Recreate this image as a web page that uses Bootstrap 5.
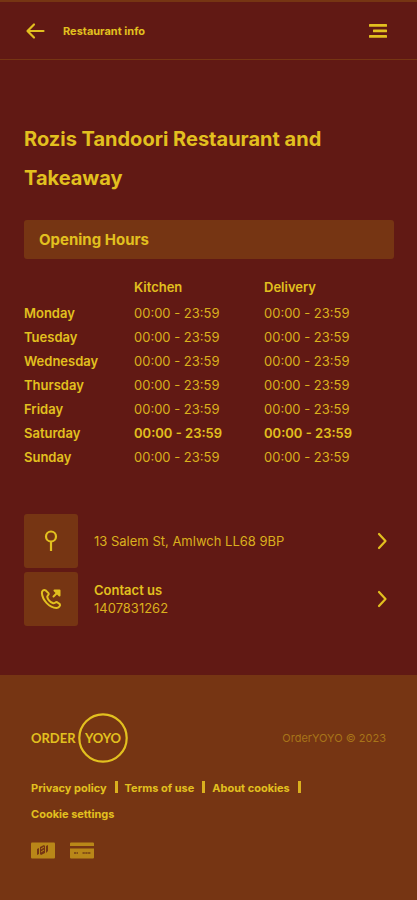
<!DOCTYPE html>
<html lang="en">
<head>
<meta charset="utf-8">
<meta name="viewport" content="width=device-width, initial-scale=1">
<title>Restaurant info</title>
<link href="https://cdn.jsdelivr.net/npm/bootstrap@5.3.0/dist/css/bootstrap.min.css" rel="stylesheet">
<style>
:root { --wine: #611914; --brown: #763513; --gold: #e2c01f; --amber: #dab01e; }
body { background: var(--brown); color: var(--gold); font: 400 13px/18px Inter, "Liberation Sans", sans-serif; }
a, button { color: inherit; text-decoration: none; }
a:hover { color: #fff0a0; }
svg { display: block; flex: none; }
.page-area { background: var(--wine); }
.topbar { height: 60px; border-top: 2px solid var(--brown); border-bottom: 1px solid var(--brown); padding: 0 29px 0 25px; }
.topbar-title { font-size: 11px; font-weight: 700; line-height: 18px; margin: 0 0 0 18px; }
.info { padding: 60px 23px 49px 24px; }
.shop-name { font-size: 20px; font-weight: 700; line-height: 39px; margin: 0 0 22px; }
.section-bar { background: var(--brown); border-radius: 3px; font-size: 15px; font-weight: 700; line-height: 39px; padding: 0 15px; margin: 0 0 16px; }
.hours { width: 100%; table-layout: fixed; margin-bottom: 45px; line-height: 24px; }
.hours th, .hours td { padding: 0; }
.hours th { font-weight: 600; }
.hours .day-col { width: 110px; }
.hours .time-col { width: 130px; }
.hours thead th { padding-bottom: 2px; }
.hours td { color: var(--amber); }
.hours .today td { font-weight: 600; color: var(--gold); }
.contact-row { gap: 16px; padding-right: 6px; }
.contact-row strong { font-weight: 600; }
.tile { width: 54px; height: 54px; background: var(--brown); border-radius: 3px; flex: none; }
.amber { color: var(--amber); }
.foot { padding: 38px 31px; }
.copy { color: #a87419; font-size: 11px; }
.foot-links { font-size: 11px; font-weight: 700; line-height: 26px; margin-top: 12px; }
.foot-links li { margin-right: 7px; }
.foot-links li:not(:last-child)::after { content: ""; display: inline-block; width: 3px; height: 12px; background: var(--amber); margin-left: 8px; vertical-align: -1px; }
.pay { gap: 15px; margin-top: 15px; }
</style>
</head>
<body>
<div class="page-area">
  <header class="topbar d-flex align-items-center">
    <a href="#" aria-label="Back"><svg width="20" height="18" viewBox="0 0 20 18" fill="none" stroke="currentColor" stroke-width="2.2" stroke-linecap="round" stroke-linejoin="round"><path d="M9 2.5 2.500 9 9 15.500M3 9h15.500"/></svg></a>
    <h1 class="topbar-title flex-grow-1">Restaurant info</h1>
    <button type="button" class="border-0 bg-transparent p-0" aria-label="Menu"><svg width="20" height="18" viewBox="0 0 20 18" fill="currentColor"><rect x="1" y="2" width="18" height="2.800" rx=".6"/><rect x="5" y="7.500" width="14" height="2.800" rx=".6"/><rect x="1" y="13" width="18" height="2.800" rx=".6"/></svg></button>
  </header>
  <main class="info">
    <h2 class="shop-name">Rozis Tandoori Restaurant and Takeaway</h2>
    <h3 class="section-bar">Opening Hours</h3>
    <table class="hours">
      <thead><tr><td class="day-col"></td><th class="time-col" scope="col">Kitchen</th><th scope="col">Delivery</th></tr></thead>
      <tbody>
        <tr><th scope="row">Monday</th><td>00:00 - 23:59</td><td>00:00 - 23:59</td></tr>
        <tr><th scope="row">Tuesday</th><td>00:00 - 23:59</td><td>00:00 - 23:59</td></tr>
        <tr><th scope="row">Wednesday</th><td>00:00 - 23:59</td><td>00:00 - 23:59</td></tr>
        <tr><th scope="row">Thursday</th><td>00:00 - 23:59</td><td>00:00 - 23:59</td></tr>
        <tr><th scope="row">Friday</th><td>00:00 - 23:59</td><td>00:00 - 23:59</td></tr>
        <tr class="today"><th scope="row">Saturday</th><td>00:00 - 23:59</td><td>00:00 - 23:59</td></tr>
        <tr><th scope="row">Sunday</th><td>00:00 - 23:59</td><td>00:00 - 23:59</td></tr>
      </tbody>
    </table>
    <div class="d-flex flex-column gap-1">
      <a href="#" class="contact-row d-flex align-items-center">
        <span class="tile d-flex align-items-center justify-content-center"><svg width="22" height="22" viewBox="0 0 22 22" fill="none" stroke="currentColor" stroke-width="2.200"><circle cx="11" cy="6.500" r="5"/><path d="M11 11.500V21"/></svg></span>
        <span class="amber flex-grow-1">13 Salem St, Amlwch LL68 9BP</span>
        <svg width="12" height="18" viewBox="0 0 12 18" fill="none" stroke="currentColor" stroke-width="2.200" stroke-linecap="round" stroke-linejoin="round"><path d="m3 2 6.500 7L3 16"/></svg>
      </a>
      <a href="#" class="contact-row d-flex align-items-center">
        <span class="tile d-flex align-items-center justify-content-center"><svg width="22" height="22" viewBox="0 0 22 22" fill="none" stroke="currentColor" stroke-width="2" stroke-linecap="round" stroke-linejoin="round"><path d="M5.500 2.300C3.700 1.300 1.700 3 1.900 5.200c.5 7 7.500 14.500 14.500 14.700 2.200.1 4.500-2.400 3.400-3.800l-2.700-1.900c-1.400-.8-2.500 1.600-3.900 1.100-3-1.100-5.500-4-6-6.500-.2-1.200 2.100-2 1.500-3.400Z"/><path d="m13.500 8.500 5-5"/><path d="M14.500 2.500h5v5z" fill="currentColor"/></svg></span>
        <span class="flex-grow-1"><strong class="d-block">Contact us</strong><span class="amber d-block">1407831262</span></span>
        <svg width="12" height="18" viewBox="0 0 12 18" fill="none" stroke="currentColor" stroke-width="2.200" stroke-linecap="round" stroke-linejoin="round"><path d="m3 2 6.500 7L3 16"/></svg>
      </a>
    </div>
  </main>
</div>
<footer class="foot">
  <div class="d-flex align-items-center justify-content-between">
    <a href="#" aria-label="OrderYOYO"><svg width="98" height="50" viewBox="0 0 98 50" fill="currentColor" font-family="Lato, sans-serif" font-weight="700"><text x="0" y="30" font-size="13">ORDER</text><text x="72" y="30" font-size="13" text-anchor="middle">YOYO</text><circle cx="72" cy="25" r="23.700" fill="none" stroke="currentColor" stroke-width="2.200"/></svg></a>
    <span class="copy">OrderYOYO © 2023</span>
  </div>
  <ul class="foot-links list-unstyled d-flex flex-wrap mb-0">
    <li><a href="#">Privacy policy</a></li>
    <li><a href="#">Terms of use</a></li>
    <li><a href="#">About cookies</a></li>
    <li><a href="#">Cookie settings</a></li>
  </ul>
  <div class="pay d-flex">
    <svg width="24" height="17" viewBox="0 0 24 17" role="img" aria-label="Cash"><rect y="0.500" width="24" height="16" rx="1" fill="#b98718"/><g fill="#763513"><path d="m6 7 2-1v6l-2 1zM9 5l4-2 1 1v7l-4 2-1-1zM15 4l2-1v6l-2 2z"/></g><path d="m10 7 3-2M10 10l3-2" stroke="#b98718"/></svg>
    <svg width="24" height="17" viewBox="0 0 24 17" role="img" aria-label="Card"><path d="M0 4V1.500q0-1 1-1h22q1 0 1 1V4zM0 6.500h24v9q0 1-1 1H1q-1 0-1-1z" fill="#b98718"/><path d="M4 11h4M12.500 11h8" stroke="#855016" stroke-width="2" stroke-dasharray="2.300 .5"/></svg>
  </div>
</footer>
<script src="https://cdn.jsdelivr.net/npm/bootstrap@5.3.0/dist/js/bootstrap.bundle.min.js"></script>
</body>
</html>
